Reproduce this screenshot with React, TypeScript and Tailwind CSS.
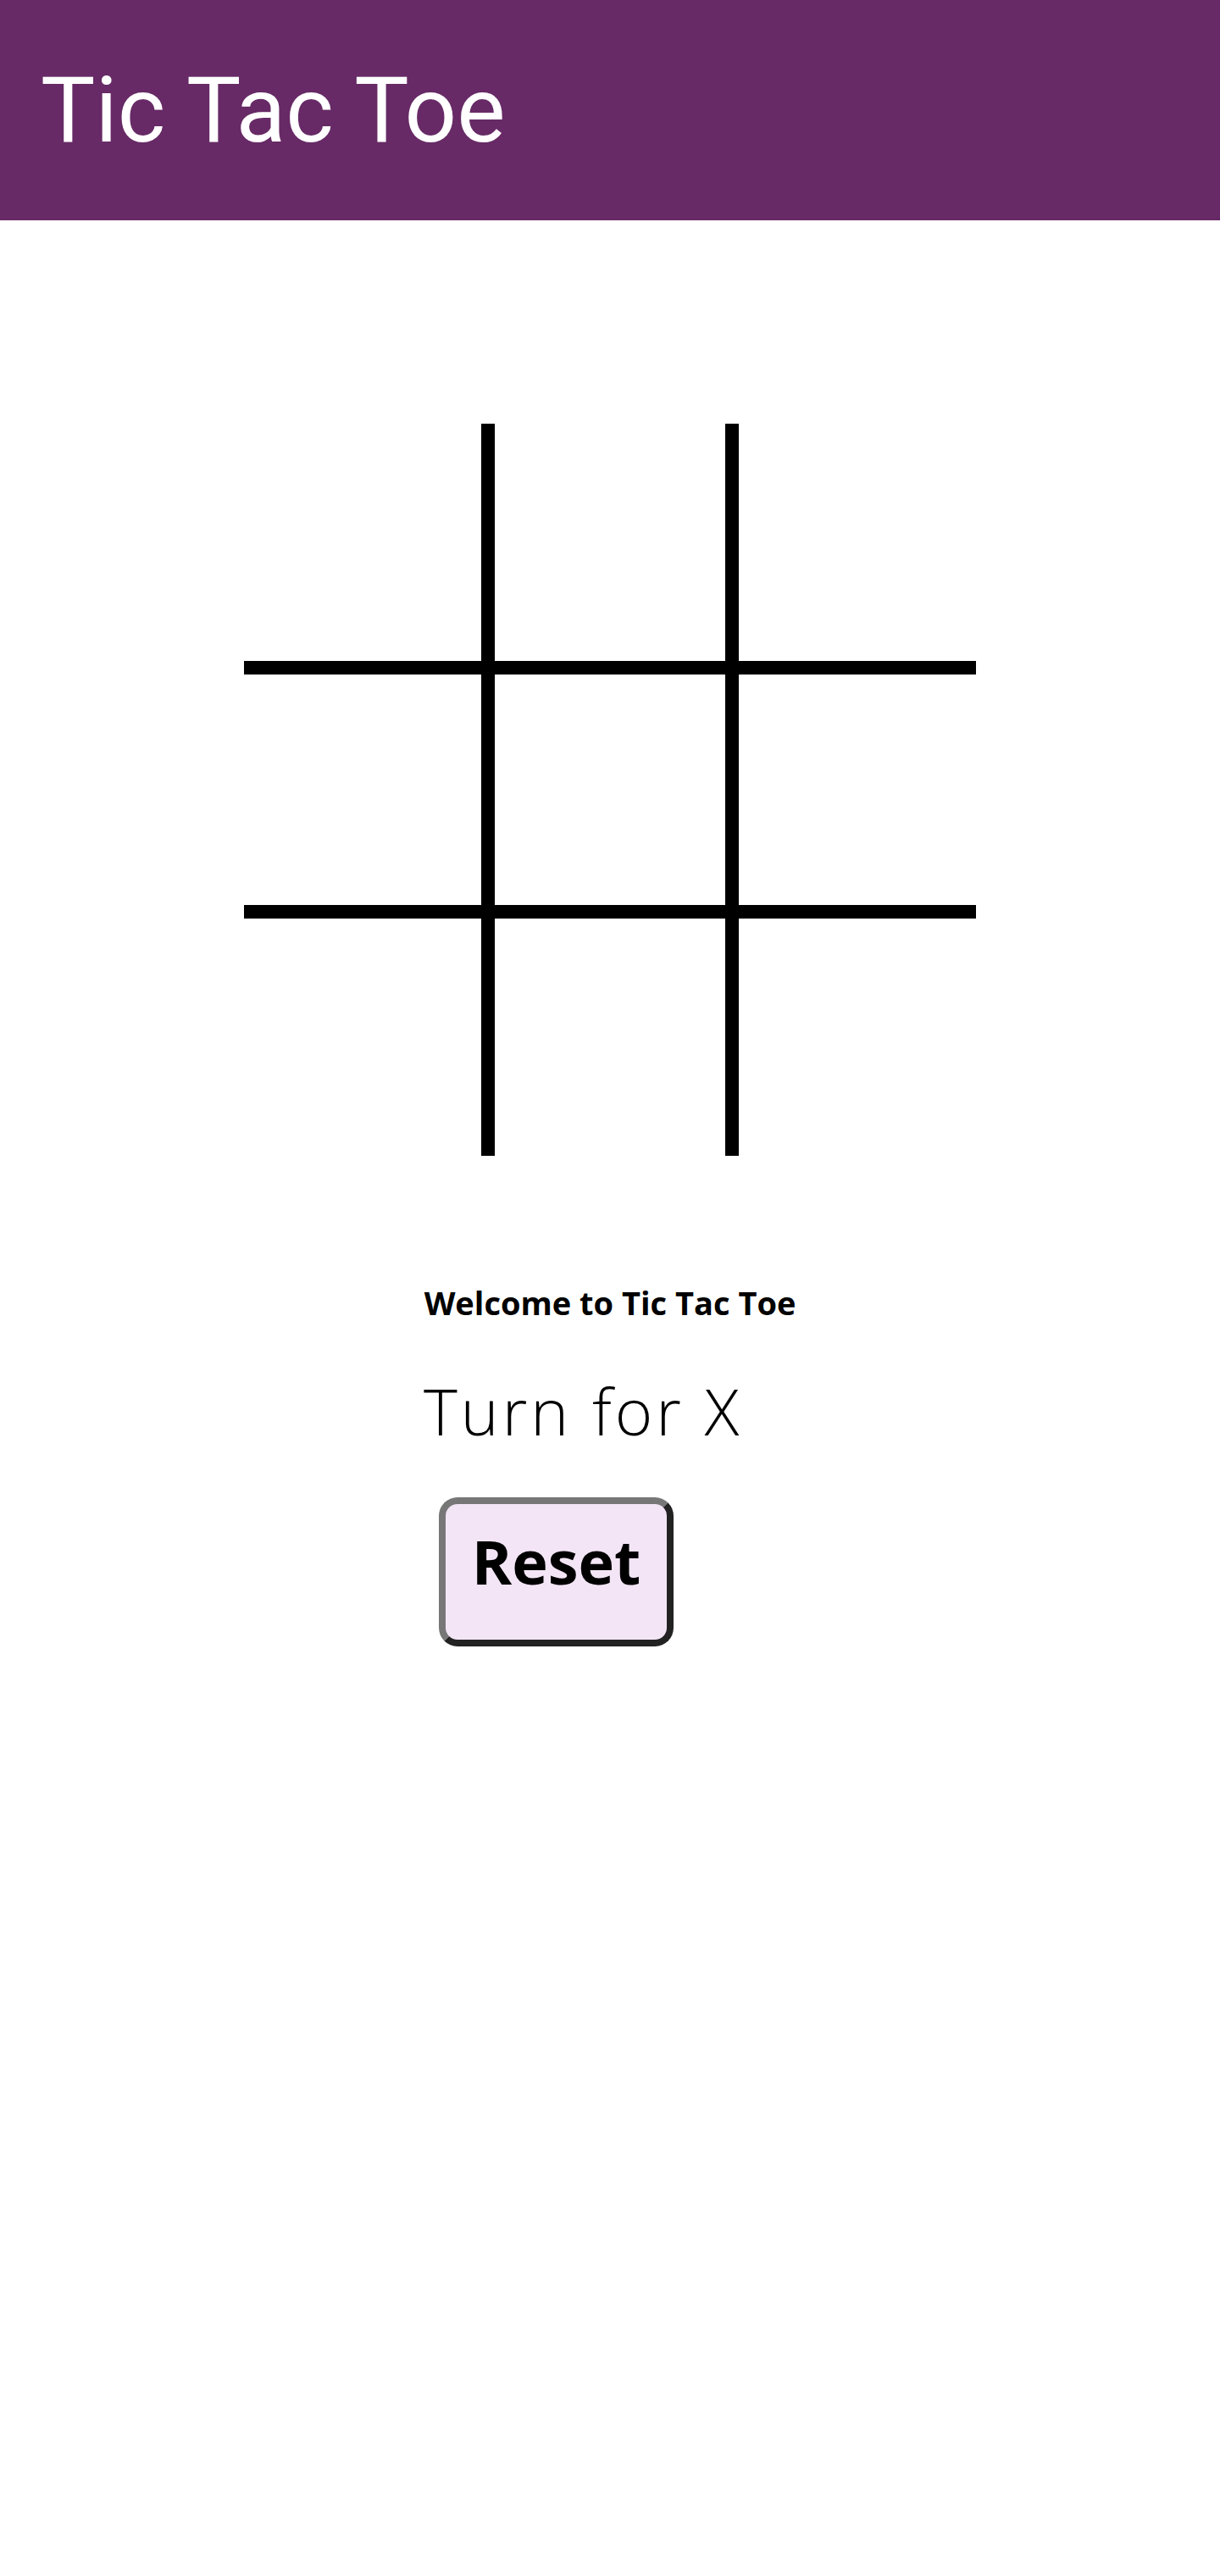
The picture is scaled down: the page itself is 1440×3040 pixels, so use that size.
import React from "react";

export default function App() {
  const cells = Array.from({ length: 9 }, (_, i) => i);
  const borderFor = (i: number) => {
    const r = Math.floor(i / 3);
    const c = i % 3;
    const cls: string[] = [];
    if (c === 0) cls.push("border-r-[8px]");
    if (c === 1) cls.push("border-x-[8px]");
    if (c === 2) cls.push("border-l-[8px]");
    if (r === 0) cls.push("border-b-[8px]");
    if (r === 1) cls.push("border-y-[8px]");
    if (r === 2) cls.push("border-t-[8px]");
    return cls.join(" ");
  };
  return (
    <div className="min-h-[3040px] w-full bg-white">
      <header className="h-[260px] bg-[#672a66] flex items-center pl-[48px]">
        <h1 className="text-white text-[108px] leading-none font-normal font-['Roboto',sans-serif] whitespace-nowrap">
          Tic Tac Toe
        </h1>
      </header>
      <main className="flex flex-col items-center pt-[240px]">
        <div className="grid grid-cols-3 w-[864px]">
          {cells.map((i) => (
            <div key={i} className={`h-[288px] border-solid border-black ${borderFor(i)}`} />
          ))}
        </div>
        <div className="w-[440px] mt-[151px] flex flex-col">
          <p className="text-[38px] leading-[44px] font-bold text-black text-center font-['Open_Sans',sans-serif] whitespace-nowrap">
            Welcome to Tic Tac Toe
          </p>
          <p className="mt-[66px] text-[76px] leading-[80px] font-light tracking-[4px] text-black font-['Open_Sans',sans-serif] whitespace-nowrap">
            Turn for X
          </p>
          <button className="mt-[62px] ml-[18px] w-[277px] h-[176px] pb-[26px] rounded-[22px] border-[8px] border-solid border-t-[#777777] border-l-[#777777] border-r-[#222222] border-b-[#222222] bg-[#f3e5f6] text-[72px] leading-none font-bold text-black font-['Open_Sans',sans-serif] flex items-center justify-center">
            Reset
          </button>
        </div>
      </main>
    </div>
  );
}
